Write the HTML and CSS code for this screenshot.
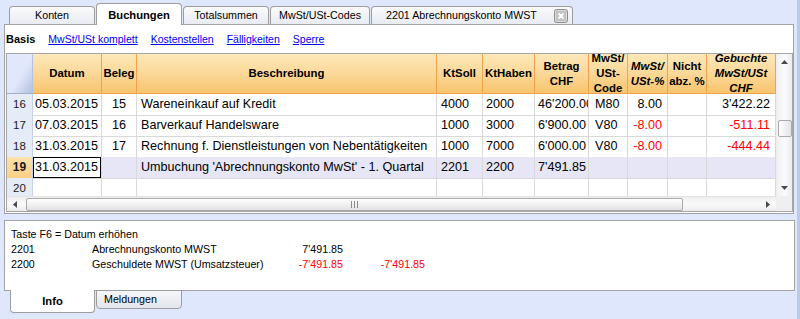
FILE: index.html
```html
<!DOCTYPE html>
<html lang="de">
<head>
<meta charset="utf-8">
<title>Buchungen</title>
<link rel="stylesheet" href="styles.css">
</head>
<body>
<div class="main">
  <div class="tabs">
    <div class="tab w1">Konten</div>
    <div class="tab active w2">Buchungen</div>
    <div class="tab w3">Totalsummen</div>
    <div class="tab w4">MwSt/USt-Codes</div>
    <div class="tab last w5"><span>2201 Abrechnungskonto MWST</span>
      <svg class="close" width="14" height="14" viewBox="0 0 14 14"><rect x="0.5" y="0.5" width="13" height="13" rx="2" fill="#c2c2c2" stroke="#8e8e8e"/><rect x="1.5" y="1.5" width="11" height="11" rx="1" fill="none" stroke="#dadada"/><path d="M4.5 4.5 L9.5 9.5 M9.5 4.5 L4.5 9.5" stroke="#fff" stroke-width="2"/></svg>
    </div>
  </div>
  <div class="panel">
    <div class="subtabs">
      <b>Basis</b>
      <a href="#">MwSt/USt komplett</a>
      <a href="#">Kostenstellen</a>
      <a href="#">Fälligkeiten</a>
      <a href="#">Sperre</a>
    </div>
    <div class="gridframe">
      <div class="table">
        <div class="row hrow">
          <div class="h corner"></div>
          <div class="h">Datum</div>
          <div class="h">Beleg</div>
          <div class="h">Beschreibung</div>
          <div class="h">KtSoll</div>
          <div class="h">KtHaben</div>
          <div class="h">Betrag<br>CHF</div>
          <div class="h">MwSt/<br>USt-<br>Code</div>
          <div class="h it">MwSt/<br>USt-%</div>
          <div class="h">Nicht<br>abz. %</div>
          <div class="h it">Gebuchte<br>MwSt/USt<br>CHF</div>
        </div>
        <div class="row">
          <div class="n">16</div>
          <div class="c dt">05.03.2015</div>
          <div class="c ctr">15</div>
          <div class="c ds">Wareneinkauf auf Kredit</div>
          <div class="c ks">4000</div>
          <div class="c kh">2000</div>
          <div class="c rt">46'200.00</div>
          <div class="c cd">M80</div>
          <div class="c rt5">8.00</div>
          <div class="c"></div>
          <div class="c rt5">3'422.22</div>
        </div>
        <div class="row">
          <div class="n">17</div>
          <div class="c dt">07.03.2015</div>
          <div class="c ctr">16</div>
          <div class="c ds">Barverkauf Handelsware</div>
          <div class="c ks">1000</div>
          <div class="c kh">3000</div>
          <div class="c rt">6'900.00</div>
          <div class="c cd">V80</div>
          <div class="c rt5 neg">-8.00</div>
          <div class="c"></div>
          <div class="c rt5 neg">-511.11</div>
        </div>
        <div class="row">
          <div class="n">18</div>
          <div class="c dt">31.03.2015</div>
          <div class="c ctr">17</div>
          <div class="c ds">Rechnung f. Dienstleistungen von Nebentätigkeiten</div>
          <div class="c ks">1000</div>
          <div class="c kh">7000</div>
          <div class="c rt">6'000.00</div>
          <div class="c cd">V80</div>
          <div class="c rt5 neg">-8.00</div>
          <div class="c"></div>
          <div class="c rt5 neg">-444.44</div>
        </div>
        <div class="row sel">
          <div class="n">19</div>
          <div class="c dt focus">31.03.2015</div>
          <div class="c ctr"></div>
          <div class="c ds">Umbuchung 'Abrechnungskonto MwSt' - 1. Quartal</div>
          <div class="c ks">2201</div>
          <div class="c kh">2200</div>
          <div class="c rt">7'491.85</div>
          <div class="c cd"></div>
          <div class="c"></div>
          <div class="c"></div>
          <div class="c"></div>
        </div>
        <div class="row">
          <div class="n">20</div>
          <div class="c"></div>
          <div class="c"></div>
          <div class="c"></div>
          <div class="c"></div>
          <div class="c"></div>
          <div class="c"></div>
          <div class="c"></div>
          <div class="c"></div>
          <div class="c"></div>
          <div class="c"></div>
        </div>
      </div>
      <div class="vs">
        <div class="sbtn"><svg width="7" height="4" viewBox="0 0 7 4"><path d="M0 4 L3.5 0 L7 4 Z" fill="#4a4a4a"/></svg></div>
        <div class="vthumb"></div>
        <div class="sfill"></div>
        <div class="sbtn"><svg width="7" height="4" viewBox="0 0 7 4"><path d="M0 0 L3.5 4 L7 0 Z" fill="#4a4a4a"/></svg></div>
      </div>
      <div class="hs">
        <div class="hbtn"><svg width="4" height="7" viewBox="0 0 4 7"><path d="M4 0 L0 3.5 L4 7 Z" fill="#4a4a4a"/></svg></div>
        <div class="hthumb"><svg width="7" height="7" viewBox="0 0 7 7"><path d="M0.5 0 V7 M3.5 0 V7 M6.5 0 V7" stroke="#8a8a8a" stroke-width="1"/></svg></div>
        <div class="sfill"></div>
        <div class="hbtn"><svg width="4" height="7" viewBox="0 0 4 7"><path d="M0 0 L4 3.5 L0 7 Z" fill="#4a4a4a"/></svg></div>
      </div>
      <div class="corner2"></div>
    </div>
  </div>
  <div class="info">
    <div class="il"><span class="full">Taste F6 = Datum erhöhen</span></div>
    <div class="il"><span>2201</span><span>Abrechnungskonto MWST</span><span class="am">7'491.85</span><span></span></div>
    <div class="il"><span>2200</span><span>Geschuldete MWST (Umsatzsteuer)</span><span class="am neg">-7'491.85</span><span class="am neg">-7'491.85</span></div>
  </div>
  <div class="btabs">
    <div class="btab active">Info</div>
    <div class="btab">Meldungen</div>
  </div>
</div>
<div class="edge"></div>
</body>
</html>
```
FILE: styles.css
```css
html, body {
  margin: 0;
  padding: 0;
}
body {
  width: 800px;
  height: 319px;
  overflow: hidden;
  display: flex;
  background: #dfe7fd;
  font-family: "Liberation Sans", Arial, sans-serif;
  color: #000;
}
.main {
  width: 797px;
}
.edge {
  width: 3px;
  background: #b9cbe9;
}

/* top tabs */
.tabs {
  display: flex;
  align-items: flex-end;
  gap: 1px;
  height: 24px;
  padding-left: 9px;
}
.tab {
  box-sizing: border-box;
  height: 18px;
  border: 1px solid #9d9d9d;
  border-bottom: none;
  border-radius: 4px 4px 0 0;
  background: linear-gradient(#fbfbfc, #e8ebf2);
  font-size: 10.7px;
  line-height: 17px;
  text-align: center;
}
.tab.active {
  height: 22px;
  margin-bottom: -1px;
  padding-top: 3px;
  background: #fff;
  font-weight: bold;
  font-size: 11.2px;
  position: relative;
  z-index: 1;
}
.w1 { width: 86px; }
.w2 { width: 86px; }
.w3 { width: 86px; }
.w4 { width: 100px; }
.w5 { width: 202px; }
.tab.last {
  display: flex;
  align-items: center;
  padding-left: 14px;
}
.tab.last .close {
  margin-left: auto;
  margin-right: 4px;
  margin-top: 1px;
}

/* main panel */
.panel {
  box-sizing: border-box;
  margin-left: 4px;
  width: 790px;
  height: 190px;
  border: 1px solid #a3a3a3;
  background: #fff;
}
.subtabs {
  display: flex;
  align-items: center;
  gap: 13px;
  height: 28px;
  padding-left: 1px;
  font-size: 10.5px;
}
.subtabs b {
  font-size: 11px;
}
.subtabs a {
  color: #0000f0;
  text-decoration: underline;
}

/* grid */
.gridframe {
  margin-left: 1px;
  width: 787px;
  box-sizing: border-box;
  border: 1px solid #a6a6a6;
  display: grid;
  grid-template-columns: 769px 16px;
  grid-template-rows: 142px 15px;
}
.table {
  overflow: hidden;
}
.row {
  display: grid;
  grid-template-columns: 26px 69px 35px 300px 46px 52px 54px 39px 40px 39px 69px;
  height: 21px;
}
.row.hrow {
  height: 40px;
}
.h {
  box-sizing: border-box;
  border-right: 1px solid #f2a24a;
  border-bottom: 1px solid #f2a24a;
  background: linear-gradient(#fde8b9 0%, #fbd898 50%, #f7c46e 100%);
  display: flex;
  align-items: center;
  justify-content: center;
  text-align: center;
  font-weight: bold;
  font-size: 11.4px;
  line-height: 15px;
  overflow: hidden;
}
.h.it {
  font-style: italic;
}
.h.corner {
  background: linear-gradient(to bottom right, #e2e8fb 55%, #b2c1de 100%);
  border-right: 1px solid #b6c2da;
  border-bottom: 1px solid #9fb0cf;
}
.n {
  box-sizing: border-box;
  background: #e5ecf7;
  border-right: 1px solid #c9d2e2;
  border-bottom: 1px solid #c9d2e2;
  text-align: center;
  font-size: 11.5px;
  line-height: 21px;
  color: #1a1a1a;
}
.c {
  box-sizing: border-box;
  border-right: 1px solid #d9d9d9;
  border-bottom: 1px solid #d9d9d9;
  font-size: 12.6px;
  line-height: 20px;
  white-space: nowrap;
  overflow: hidden;
  padding: 0 3px;
}
.dt { padding-left: 2px; }
.ctr { text-align: center; }
.ds { padding-left: 4px; }
.ks { padding-left: 4px; }
.kh { padding-left: 3px; }
.cd { padding-left: 6px; }
.rt { text-align: right; padding-right: 3px; }
.rt5 { text-align: right; padding-right: 5px; }
.neg { color: #ff0000; }
.sel .c {
  background: #e6e6f6;
}
.sel .n {
  background: linear-gradient(#fde2ad, #fbcf85);
  border-bottom: 1px solid #f0a040;
  font-weight: bold;
  font-size: 12px;
}
.sel .c.focus {
  background: #fff;
  box-shadow: inset 0 0 0 1px #000;
}

/* scrollbars */
.vs {
  display: flex;
  flex-direction: column;
  align-items: center;
  background: linear-gradient(to right, #f1f1f1, #fbfbfb 50%, #ededed);
  border-left: 1px solid #ececec;
  box-sizing: border-box;
}
.sbtn {
  height: 16px;
  width: 100%;
  display: flex;
  align-items: center;
  justify-content: center;
}
.sfill {
  flex: 1;
}
.vthumb {
  margin-top: 50px;
  width: 14px;
  height: 17px;
  box-sizing: border-box;
  border: 1px solid #a9a9a9;
  border-radius: 2px;
  background: linear-gradient(to right, #ffffff, #e3e3e3);
}
.hs {
  display: flex;
  align-items: center;
  background: linear-gradient(#eeeeee, #fafafa 50%, #ececec);
  border-top: 1px solid #e3e3e3;
  box-sizing: border-box;
}
.hbtn {
  width: 16px;
  height: 100%;
  display: flex;
  align-items: center;
  justify-content: center;
}
.hthumb {
  margin-left: 3px;
  width: 657px;
  height: 13px;
  box-sizing: border-box;
  border: 1px solid #a9a9a9;
  border-radius: 2px;
  background: linear-gradient(#ffffff, #e2e2e2);
  display: flex;
  align-items: center;
  justify-content: center;
}
.corner2 {
  background: #efefef;
}

/* info panel */
.info {
  box-sizing: border-box;
  margin: 6px 0 0 4px;
  width: 791px;
  height: 71px;
  border: 1px solid #a3a3a3;
  background: #fff;
  padding: 6px 0 0 6px;
  font-size: 10.7px;
  line-height: 15px;
}
.il {
  display: grid;
  grid-template-columns: 81px 180px 71px 82px;
  white-space: nowrap;
}
.il .full {
  grid-column: 1 / 5;
}
.il .am {
  text-align: right;
}

/* bottom tabs */
.btabs {
  display: flex;
  align-items: flex-start;
  gap: 1px;
  margin-top: -1px;
  padding-left: 10px;
}
.btab {
  box-sizing: border-box;
  width: 86px;
  height: 19px;
  border: 1px solid #9d9d9d;
  border-radius: 0 0 4px 4px;
  background: linear-gradient(#f5f6f9, #e3e6ee);
  font-size: 10.7px;
  line-height: 17px;
  padding-left: 7px;
}
.btab.active {
  width: 85px;
  height: 23px;
  border-top: none;
  background: #fff;
  font-weight: bold;
  font-size: 11.2px;
  text-align: center;
  padding: 3px 0 0 0;
}
```
